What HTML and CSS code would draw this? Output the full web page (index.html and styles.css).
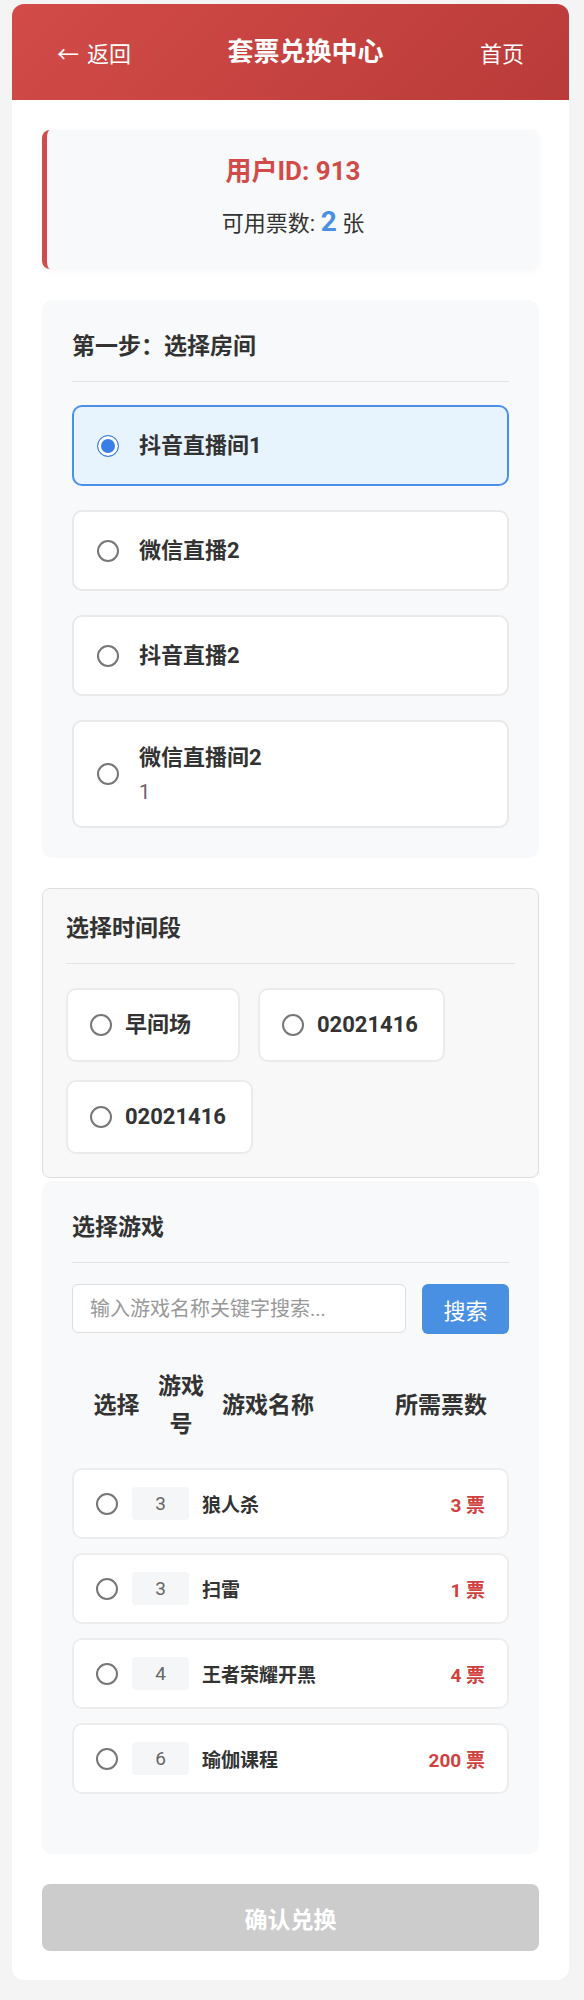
FILE: index.html
```html
<!DOCTYPE html>
<html lang="zh-CN">

<head>
    <meta charset="UTF-8" />
    <meta name="viewport" content="width=device-width, initial-scale=1.0" />
    <title>套票兑换中心</title>
    <link rel="stylesheet" href="styles.css">
</head>

<body>
    <div class="main">
        <div class="header">
            <a class="header-link"><span class="back-arrow">←</span>返回</a>
            <div class="header-title">套票兑换中心</div>
            <a class="header-link">首页</a>
        </div>

        <div class="content">
            <div class="user-card">
                <div class="user-id">用户ID: 913</div>
                <div class="user-tickets">可用票数: <span class="ticket-count">2</span> 张</div>
            </div>

            <div class="section">
                <div class="section-title">第一步：选择房间</div>
                <label class="room-option selected">
                    <input type="radio" name="room" checked>
                    <div class="room-info">
                        <div class="room-name">抖音直播间1</div>
                    </div>
                </label>
                <label class="room-option">
                    <input type="radio" name="room">
                    <div class="room-info">
                        <div class="room-name">微信直播2</div>
                    </div>
                </label>
                <label class="room-option">
                    <input type="radio" name="room">
                    <div class="room-info">
                        <div class="room-name">抖音直播2</div>
                    </div>
                </label>
                <label class="room-option">
                    <input type="radio" name="room">
                    <div class="room-info has-desc">
                        <div class="room-name">微信直播间2</div>
                        <div class="room-desc">1</div>
                    </div>
                </label>
            </div>

            <div class="time-section">
                <div class="section-title">选择时间段</div>
                <div class="time-options">
                    <label class="time-option"><input type="radio" name="time"> 早间场</label>
                    <label class="time-option"><input type="radio" name="time"> 02021416</label>
                    <label class="time-option"><input type="radio" name="time"> 02021416</label>
                </div>
            </div>

            <div class="section game-section">
                <div class="section-title">选择游戏</div>
                <div class="search-bar">
                    <input class="search-input" type="text" placeholder="输入游戏名称关键字搜索...">
                    <button class="search-btn">搜索</button>
                </div>
                <div class="game-table-header">
                    <div class="col-select">选择</div>
                    <div class="col-id">游戏号</div>
                    <div class="col-name">游戏名称</div>
                    <div class="col-cost">所需票数</div>
                </div>
                <div class="game-list">
                    <label class="game-row">
                        <input type="radio" name="game">
                        <div class="game-id">3</div>
                        <div class="game-name">狼人杀</div>
                        <div class="game-cost">3 票</div>
                    </label>
                    <label class="game-row">
                        <input type="radio" name="game">
                        <div class="game-id">3</div>
                        <div class="game-name">扫雷</div>
                        <div class="game-cost">1 票</div>
                    </label>
                    <label class="game-row">
                        <input type="radio" name="game">
                        <div class="game-id">4</div>
                        <div class="game-name">王者荣耀开黑</div>
                        <div class="game-cost">4 票</div>
                    </label>
                    <label class="game-row">
                        <input type="radio" name="game">
                        <div class="game-id">6</div>
                        <div class="game-name">瑜伽课程</div>
                        <div class="game-cost">200 票</div>
                    </label>
                </div>
            </div>

            <button class="confirm-btn" disabled>确认兑换</button>
        </div>
    </div>
</body>

</html>
```

FILE: styles.css
```css
body {
    margin: 0;
    background-color: #f4f4f4;
    font-family: Roboto, "Noto Sans CJK SC", sans-serif;
    color: #333;
}

.main {
    margin: 4px 15px 21px 12px;
    background-color: #fff;
    border-radius: 12px;
    overflow: hidden;
}

/* header */
.header {
    height: 96px;
    padding: 0 45px;
    display: flex;
    align-items: center;
    justify-content: space-between;
    background: linear-gradient(135deg, #d24b48, #b93b39);
    color: #fff;
}

.header-link {
    font-family: "Noto Sans CJK SC", sans-serif;
    font-size: 22px;
    line-height: 36px;
}

.back-arrow {
    margin-right: 8px;
}

.header-title {
    font-size: 26px;
    font-weight: bold;
    line-height: 36px;
}

.content {
    padding: 30px 30px 29px;
}

/* user info */
.user-card {
    background-color: #f8f9fa;
    border-left: 5px solid #d24b48;
    border-radius: 8px;
    padding: 24px 20px 23px;
    margin-bottom: 31px;
    text-align: center;
    box-shadow: 0 2px 8px rgba(0, 0, 0, 0.04);
}

.user-id {
    font-size: 26px;
    font-weight: bold;
    line-height: 34px;
    color: #d24b48;
    margin-bottom: 14px;
}

.user-tickets {
    font-size: 22px;
    line-height: 44px;
}

.ticket-count {
    font-size: 28px;
    font-weight: bold;
    line-height: 1;
    color: #4a90e2;
}

/* sections */
.section {
    background-color: #f8f9fa;
    border-radius: 10px;
    padding: 30px;
    margin-bottom: 30px;
}

.section-title {
    font-size: 23px;
    font-weight: bold;
    line-height: 33px;
    padding-bottom: 18px;
    border-bottom: 1px solid #e3e3e3;
    margin-bottom: 23px;
}

input[type="radio"] {
    appearance: none;
    -webkit-appearance: none;
    width: 22px;
    height: 22px;
    margin: 0;
    flex-shrink: 0;
    border: 2px solid #777;
    border-radius: 50%;
    background-color: #fff;
}

input[type="radio"]:checked {
    border: 1.5px solid #3b7ee8;
    background-color: #3b7ee8;
    box-shadow: inset 0 0 0 3px #fff;
}

.room-option {
    display: flex;
    align-items: center;
    gap: 20px;
    padding: 22px 23px;
    border: 2px solid #e9e9e9;
    border-radius: 10px;
    background-color: #fff;
    margin-bottom: 24px;
}

.room-option:last-child {
    margin-bottom: 0;
}

.room-option.selected {
    border-color: #4a8fe8;
    background-color: #e8f4fd;
}

.room-name {
    font-size: 22px;
    font-weight: bold;
    line-height: 33px;
}

.has-desc .room-name {
    line-height: 28px;
}

.room-desc {
    font-size: 20px;
    line-height: 24px;
    margin-top: 8px;
    color: #666;
}

/* time */
.time-section {
    background-color: #f8f8f8;
    border: 1px solid #dedede;
    border-radius: 8px;
    padding: 23px;
    margin-bottom: 3px;
}

.time-section .section-title {
    margin-bottom: 24px;
}

.time-options {
    display: flex;
    flex-wrap: wrap;
    gap: 18px;
}

.time-option {
    display: flex;
    align-items: center;
    gap: 13px;
    min-width: 174px;
    box-sizing: border-box;
    padding: 18px 25px 18px 22px;
    border: 2px solid #ebebeb;
    border-radius: 10px;
    background-color: #fff;
    font-size: 22px;
    font-weight: bold;
    line-height: 34px;
}

/* games */
.game-section .section-title {
    margin-bottom: 21px;
}

.search-bar {
    display: flex;
    gap: 16px;
    margin-bottom: 22px;
}

.search-input {
    flex: 1;
    min-width: 0;
    height: 49px;
    box-sizing: border-box;
    border: 1px solid #ddd;
    border-radius: 6px;
    padding: 0 17px;
    font-family: inherit;
    font-size: 20px;
    background-color: #fff;
}

.search-input::placeholder {
    color: #999;
}

.search-btn {
    width: 87px;
    height: 50px;
    border: none;
    border-radius: 6px;
    background-color: #4a90e2;
    color: #fff;
    font-family: inherit;
    font-size: 22px;
}

.game-table-header {
    display: grid;
    grid-template-columns: 84px 50px 1fr 136px;
    align-items: center;
    padding: 12px 0;
    margin-bottom: 12px;
    font-size: 23px;
    font-weight: bold;
    line-height: 38px;
}

.col-select {
    text-align: center;
    padding-left: 5px;
}

.col-id {
    text-align: center;
}

.col-name {
    padding-left: 16px;
}

.col-cost {
    text-align: center;
}

.game-list {
    margin-bottom: 30px;
}

.game-row {
    display: flex;
    align-items: center;
    height: 71px;
    box-sizing: border-box;
    padding: 0 22px;
    border: 2px solid #ededed;
    border-radius: 10px;
    background-color: #fff;
    margin-bottom: 14px;
}

.game-row:last-child {
    margin-bottom: 0;
}

.game-row input {
    margin-right: 14px;
}

.game-id {
    width: 57px;
    height: 33px;
    line-height: 33px;
    margin-right: 13px;
    text-align: center;
    border-radius: 4px;
    background-color: #f5f6f8;
    color: #666;
    font-size: 19px;
}

.game-name {
    flex: 1;
    font-size: 19px;
    font-weight: bold;
}

.game-cost {
    font-size: 19px;
    font-weight: bold;
    color: #d0413f;
}

.confirm-btn {
    display: block;
    width: 100%;
    height: 67px;
    border: none;
    border-radius: 8px;
    background-color: #ccc;
    color: #fff;
    font-family: inherit;
    font-size: 23px;
    font-weight: bold;
}
```
